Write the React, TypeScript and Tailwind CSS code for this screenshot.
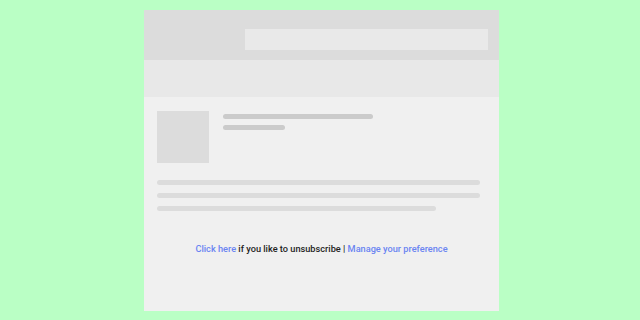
import React from 'react';

// Email template skeleton preview with unsubscribe footer
export default function App() {
  return (
    <div className="w-[640px] h-[320px] bg-[#baffc5] pt-[10px] pl-[144px]">
      <div className="w-[355px] h-[301px] bg-[#f0f0f0] flex flex-col">
        {/* Header with search bar */}
        <div className="h-[50px] bg-[#dcdcdc] flex pt-[19px] pl-[101px] pr-[11px]">
          <div className="h-[21px] flex-1 bg-[#e9e9e9]" />
        </div>
        {/* Sub band */}
        <div className="h-[37px] bg-[#e8e8e8]" />

        {/* Body */}
        <div className="px-[13px] pt-[14px]">
          <div className="flex gap-[14px]">
            <div className="w-[52px] h-[52px] bg-[#dcdcdc]" />
            <div className="flex flex-col gap-[6px] pt-[3px]">
              <div className="w-[150px] h-[5px] rounded-full bg-[#cbcbcb]" />
              <div className="w-[62px] h-[5px] rounded-full bg-[#cbcbcb]" />
            </div>
          </div>
          <div className="mt-[17px] flex flex-col gap-[8px]">
            <div className="w-[323px] h-[5px] rounded-full bg-[#dcdcdc]" />
            <div className="w-[323px] h-[5px] rounded-full bg-[#dcdcdc]" />
            <div className="w-[279px] h-[5px] rounded-full bg-[#dcdcdc]" />
          </div>
          <p className="mt-[31px] text-center text-[9.2px] leading-[14px] font-medium text-[#1e1e1e] font-['Roboto',sans-serif]">
            <a className="text-[#6a84f2]">Click here</a> if you like to unsubscribe |{' '}
            <a className="text-[#6a84f2]">Manage your preference</a>
          </p>
        </div>
      </div>
    </div>
  );
}
